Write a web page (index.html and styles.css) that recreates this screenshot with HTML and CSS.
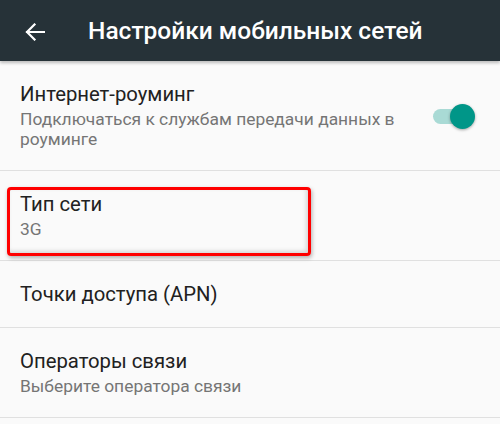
FILE: index.html
```html
<!DOCTYPE html>
<html lang="ru">
<head>
<meta charset="utf-8">
<link rel="stylesheet" href="styles.css">
</head>
<body>
<header class="toolbar">
  <svg class="back" width="20" height="18" viewBox="0 0 20 18"><path d="M19 9H2M9.5 1.5L2 9l7.5 7.5" fill="none" stroke="#fff" stroke-width="2.2" stroke-linecap="square"/></svg>
  <h1 class="title">Настройки мобильных сетей</h1>
</header>
<main class="list">
  <div class="row">
    <div class="text">
      <div class="primary">Интернет-роуминг</div>
      <div class="secondary">Подключаться к службам передачи данных в роуминге</div>
    </div>
    <div class="switch"><span class="track"></span><span class="thumb"></span></div>
  </div>
  <div class="row marked">
    <div class="text">
      <div class="primary">Тип сети</div>
      <div class="secondary">3G</div>
    </div>
    <span class="highlight"></span>
  </div>
  <div class="row">
    <div class="text">
      <div class="primary">Точки доступа (APN)</div>
    </div>
  </div>
  <div class="row">
    <div class="text">
      <div class="primary">Операторы связи</div>
      <div class="secondary">Выберите оператора связи</div>
    </div>
  </div>
</main>
</body>
</html>
```
FILE: styles.css
```css
html, body {
  margin: 0;
  padding: 0;
  background: #fafafa;
  font-family: Roboto, "Noto Sans", sans-serif;
}
.toolbar {
  height: 61px;
  background: #263238;
  display: flex;
  align-items: center;
  box-shadow: 0 2px 3px rgba(0,0,0,0.25);
  position: relative;
  z-index: 1;
}
.back {
  margin-left: 25px;
  margin-top: 2px;
}
.title {
  margin: 0 0 0 43px;
  color: #fff;
  font-size: 24.5px;
  font-weight: 500;
  line-height: 28px;
}
.list {
  display: flex;
  flex-direction: column;
}
.row {
  display: flex;
  align-items: center;
  gap: 16px;
  padding: 21px 25px 21px 20px;
  border-bottom: 1px solid #e0e0e0;
  position: relative;
}
.text {
  flex: 1;
}
.primary {
  font-size: 20.3px;
  line-height: 24px;
  color: #212121;
}
.secondary {
  margin-top: 3px;
  font-size: 17.4px;
  line-height: 20px;
  color: #757575;
}
.switch {
  position: relative;
  width: 42px;
  height: 24px;
  flex: none;
}
.track {
  position: absolute;
  left: 0;
  top: 5px;
  width: 36px;
  height: 15px;
  border-radius: 8px;
  background: #a9dad5;
}
.thumb {
  position: absolute;
  right: 0;
  top: 0;
  width: 25px;
  height: 25px;
  border-radius: 50%;
  background: #009688;
  box-shadow: 0 1px 3px rgba(0,0,0,0.35);
}
.highlight {
  position: absolute;
  left: 7px;
  top: 16px;
  width: 298px;
  height: 63px;
  border: 3px solid #ff0000;
  border-radius: 4px;
  box-shadow: 1px 2px 4px rgba(0,0,0,0.3), inset -2px -2px 4px rgba(0,0,0,0.15);
}
```
